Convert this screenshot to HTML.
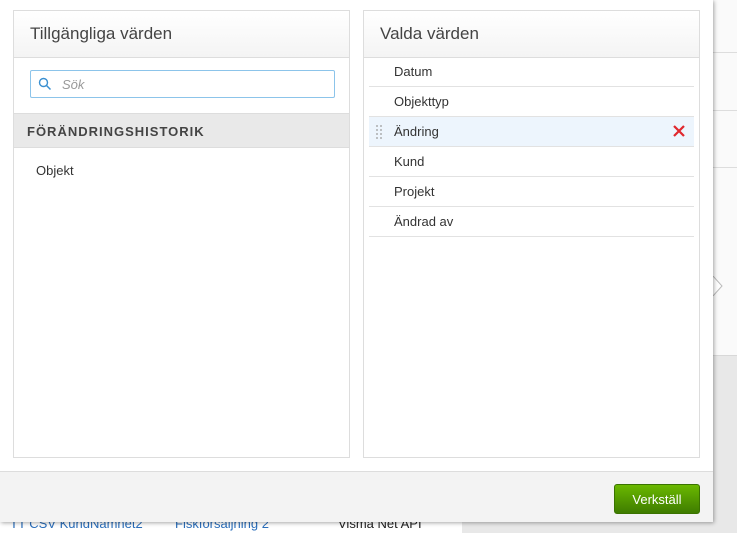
<!DOCTYPE html>
<html><head><meta charset="utf-8"><style>
*{box-sizing:border-box;margin:0;padding:0}
body{width:737px;height:533px;overflow:hidden;position:relative;font-family:"Liberation Sans",sans-serif;background:#fff;color:#333}
.bgr{position:absolute;left:713px;top:0;width:24px;height:355px;background:#fafafa}
.bgg{position:absolute;left:713px;top:355px;width:24px;height:178px;background:#e8e8e8;border-top:1px solid #d8d8d8}
.hl{position:absolute;left:713px;width:24px;height:1px;background:#ddd}
.bot{position:absolute;left:0;top:520px;width:462px;height:13px;background:#fff;font-size:13px;color:#2a6ebb}
.bot2{position:absolute;left:462px;top:520px;width:275px;height:13px;background:#e8e8e8}
.pop{position:absolute;left:0;top:0;width:713px;height:522px;background:#fff;box-shadow:1px 1px 4px rgba(0,0,0,.35)}
.panel{position:absolute;top:10px;width:337px;height:448px;border:1px solid #ddd;background:#fff}
.hd{height:47px;border-bottom:1px solid #ddd;background:linear-gradient(#fff,#f4f4f4);font-size:17px;color:#444;padding:13px 0 0 16px}
.search{position:absolute;left:16px;top:59px;width:305px;height:28px;border:1px solid #8cc4ea;border-radius:2px;font-size:13px;font-style:italic;color:#999;padding:6px 0 0 31px}
.sec{position:absolute;left:0;top:102px;width:335px;height:35px;background:#e9e9e9;border-top:1px solid #ddd;border-bottom:1px solid #ddd;font-size:13px;font-weight:bold;letter-spacing:1px;color:#444;padding:10px 0 0 13px}
.row{position:absolute;left:5px;width:325px;height:30px;border-bottom:1px solid #e2e2e2;font-size:13px;padding:7px 0 0 25px;color:#333}
.foot{position:absolute;left:0;top:471px;width:713px;height:51px;background:#f3f3f3;border-top:1px solid #ddd}
.btn{position:absolute;left:614px;top:12px;width:86px;height:30px;border-radius:3px;background:linear-gradient(#6ab800,#3f7c00);border:1px solid #3a7300;color:#fff;font-size:13px;text-align:center;padding-top:7px}
</style></head><body>
<div class="bgr"></div><div class="bgg"></div>
<div class="hl" style="top:52px"></div><div class="hl" style="top:110px"></div><div class="hl" style="top:167px"></div>
<svg style="position:absolute;left:712px;top:276px" width="12" height="20"><path d="M1 0 L10 10 L1 20" fill="#fff" stroke="#bbb"/></svg>
<div class="bot"><span style="position:absolute;left:10px;top:-4px">TT CSV KundNamnet2</span><span style="position:absolute;left:175px;top:-4px">Fiskförsäljning 2</span><span style="position:absolute;left:338px;top:-4px;color:#222">Visma Net API</span></div>
<div class="bot2"></div>
<div class="pop">
 <div class="panel" style="left:13px">
  <div class="hd">Tillgängliga värden</div>
  <div class="search"><svg style="position:absolute;left:7px;top:6px" width="14" height="14"><circle cx="5.5" cy="5.5" r="4" fill="none" stroke="#3a8fd0" stroke-width="1.4"/><path d="M8.5 8.5L12.5 12.5" stroke="#3a8fd0" stroke-width="1.5"/></svg>Sök</div>
  <div class="sec">FÖRÄNDRINGSHISTORIK</div>
  <div style="position:absolute;left:22px;top:152px;font-size:13px">Objekt</div>
 </div>
 <div class="panel" style="left:363px">
  <div class="hd">Valda värden</div>
  <div class="row" style="top:46px">Datum</div>
  <div class="row" style="top:76px">Objekttyp</div>
  <div class="row" style="top:106px;background:#edf5fd">Ändring
   <svg style="position:absolute;left:7px;top:8px" width="6" height="15"><g fill="#999"><circle cx="1" cy="1" r=".9"/><circle cx="5" cy="1" r=".9"/><circle cx="1" cy="5" r=".9"/><circle cx="5" cy="5" r=".9"/><circle cx="1" cy="9" r=".9"/><circle cx="5" cy="9" r=".9"/><circle cx="1" cy="13" r=".9"/><circle cx="5" cy="13" r=".9"/></g></svg>
   <svg style="position:absolute;left:304px;top:8px" width="12" height="12"><path d="M1 1L11 11M11 1L1 11" stroke="#e0282e" stroke-width="2.2"/></svg></div>
  <div class="row" style="top:136px">Kund</div>
  <div class="row" style="top:166px">Projekt</div>
  <div class="row" style="top:196px">Ändrad av</div>
 </div>
 <div class="foot"><div class="btn">Verkställ</div></div>
</div>
</body></html>
